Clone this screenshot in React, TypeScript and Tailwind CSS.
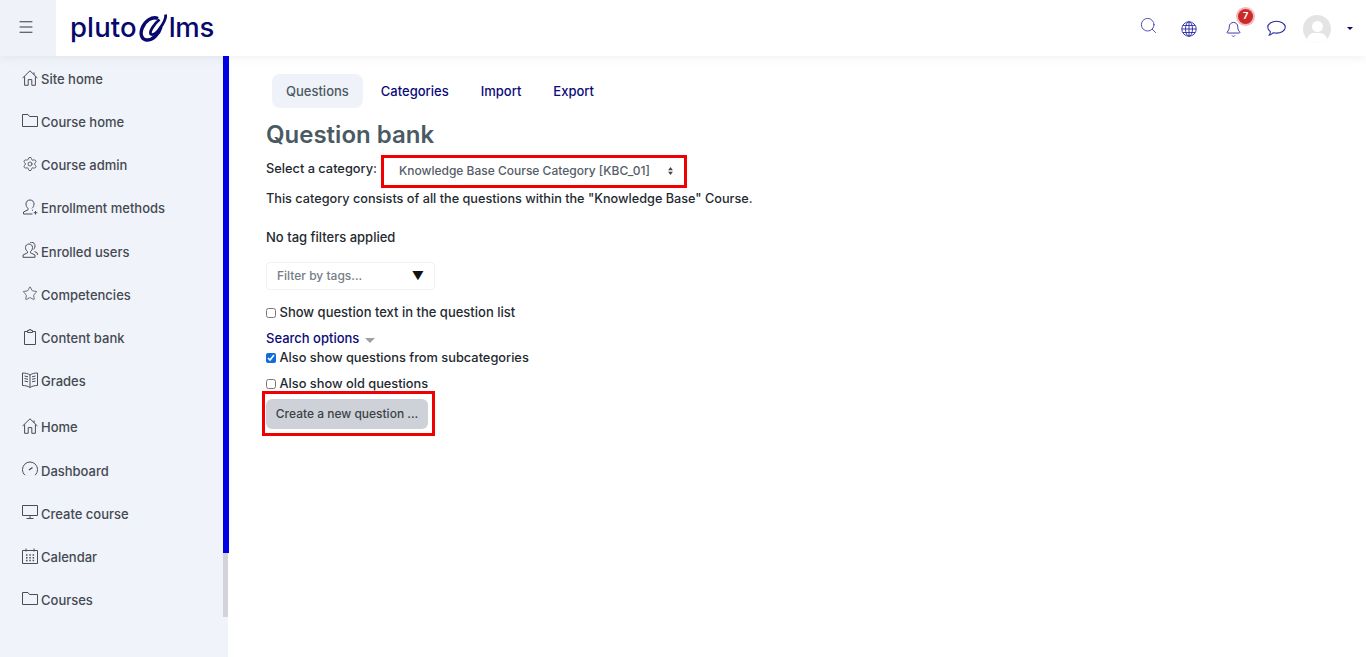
import { Menu, Search, Bell, Settings, Star } from 'lucide-react';
import type { ReactNode } from 'react';

const FONT = "font-['Inter','Liberation_Sans',sans-serif]";

function Line({ children, className }: { children: ReactNode; className?: string }) {
  return (
    <svg viewBox="0 0 16 16" fill="none" stroke="currentColor" strokeWidth="1" className={className}>
      {children}
    </svg>
  );
}

const houseIcon = (
  <Line className="size-[16px]">
    <path d="M.6 8 8 .8 15.4 8M2.600 6.400v8.900h3.600V9.600h3.600v5.700h3.600V6.400M12 2.400v2.400" />
  </Line>
);
const folderIcon = (
  <Line className="size-[16px]">
    <path d="M.5 13.500V1.500h5.500l1.500 2h8v10z" />
  </Line>
);
const gearIcon = <Settings size={16} strokeWidth={1.3} />;
const userPlusIcon = (
  <Line className="size-[16px]">
    <path d="M8 1c-2.400 0-4 1.600-4 4 0 2 1 3.500 2 4.300v1.500L1.500 13v2h9M10 9.300c1-.8 2-2.300 2-4.300 0-2.400-1.600-4-4-4M10 11l1 .4M13.500 12v3.500M11.700 13.700h3.600" />
  </Line>
);
const usersIcon = (
  <Line className="size-[16px]">
    <path d="M7 2C4.800 2 3.500 3.500 3.500 5.500c0 2 .8 3.200 2 4v1.300L1 13v2.300h12V13l-4.500-2.200V9.500c1.200-.8 2-2 2-4C10.500 3.500 9.200 2 7 2zM8 .7c.5-.3 1-.4 1.500-.4 2.200 0 3.500 1.500 3.500 3.500 0 1.700-.6 2.800-1.500 3.600M12.500 9.500 15.300 11v2" />
  </Line>
);
const starIcon = <Star size={17} strokeWidth={1.2} />;
const clipboardIcon = (
  <Line className="size-[16px]">
    <path d="M2.500 2.500h3M10.500 2.500h3v13h-11v-13M5.500 3.500v-2h1.500V.7h2v.8h1.500v2z" />
  </Line>
);
const bookIcon = (
  <Line className="size-[16px]">
    <path d="M8 3C6 1.500 3 1 .5 1v12.500c2.500 0 5.500.5 7.500 2 2-1.500 5-2 7.500-2V1C13 1 10 1.500 8 3zM8 3v12.500M2.500 4 6 4.800M2.500 6.500 6 7.300M2.500 9 6 9.800M13.500 4l-3.500.8M13.500 6.500l-3.500.8M13.500 9l-3.500.8" />
  </Line>
);
const gaugeIcon = (
  <Line className="size-[16px]">
    <path d="M3 14.200C1.400 12.800.5 10.800.5 8.500A7.500 7.500 0 0 1 8 1a7.500 7.500 0 0 1 7.500 7.500c0 2.300-.9 4.300-2.500 5.700" />
    <path d="M7 9l3.500-2.500" strokeWidth="1.400" />
  </Line>
);
const monitorIcon = (
  <Line className="size-[16px]">
    <path d="M.5 1.500h15v10H.5zM8 11.500v2.500M4.500 14.500h7" />
  </Line>
);
const calendarIcon = (
  <Line className="size-[16px]">
    <path d="M.5 2.500h15v13H.5zM4 .5v3M12 .5v3" />
    <path d="M4 7h1.500M7.300 7h1.500M10.600 7h1.500M4 9.700h1.500M7.300 9.700h1.500M10.600 9.700h1.500M4 12.400h1.500M7.300 12.400h1.500M10.600 12.400h1.500" strokeWidth="1.500" />
  </Line>
);

const SITE_NAV: [string, ReactNode][] = [
  ['Site home', houseIcon],
  ['Course home', folderIcon],
  ['Course admin', gearIcon],
  ['Enrollment methods', userPlusIcon],
  ['Enrolled users', usersIcon],
  ['Competencies', starIcon],
  ['Content bank', clipboardIcon],
  ['Grades', bookIcon],
];

const MAIN_NAV: [string, ReactNode][] = [
  ['Home', houseIcon],
  ['Dashboard', gaugeIcon],
  ['Create course', monitorIcon],
  ['Calendar', calendarIcon],
  ['Courses', folderIcon],
];

function NavItem({ label, icon }: { label: string; icon: ReactNode }) {
  return (
    <a className="flex h-[43.2px] items-center pl-[22px] pt-[4px] text-[13px] font-medium text-[#444a52]">
      <span className="mr-[3px] -mt-[4px] flex w-[16px] shrink-0 justify-center text-[#4c4c58]">{icon}</span>
      {label}
    </a>
  );
}

function Logo() {
  return (
    <div className="flex items-center text-[27.500px] leading-none font-medium tracking-[0.1px] text-[#08086e]">
      <span>pluto</span>
      <svg viewBox="0 0 28 30" className="ml-[2px] -mt-[1px] h-[30px] w-[28px]" fill="none" stroke="#08086e">
        <path d="M19 5.500C13 3 6 8 3.200 15c-2.400 6-.6 11.500 4 12 6.500.6 13-6.500 14.800-13" strokeWidth="3.400" />
        <path d="M26.500 1.500c.6 2.500-1.500 8-5 13-3 4.400-6.500 7.500-9 7-1.800-.5-1.200-3.500 1-7 2-3.200 4.500-6 7-8" strokeWidth="2.800" />
      </svg>
      <span className="ml-[2px] tracking-[-0.3px]">lms</span>
    </div>
  );
}

function Check({ label, checked, size }: { label: string; checked?: boolean; size: string }) {
  return (
    <label className={`flex items-center font-medium text-[#1f2a30] ${size}`}>
      <input type="checkbox" readOnly checked={!!checked} className="mr-[3.500px] -mt-[1px] size-[10px] accent-[#0f6cdb]" />
      {label}
    </label>
  );
}

export default function App() {
  return (
    <div className={`${FONT} flex h-[657px] flex-col overflow-hidden bg-white`}>
      {/* Top bar */}
      <header className="relative z-10 flex h-[56px] shrink-0 items-center bg-white shadow-[0_2px_10px_rgba(0,0,0,0.06)]">
        <button className="flex h-full w-[56px] items-center justify-center bg-[#eff2f8] pr-[4px] text-[#333]">
          <Menu size={18} strokeWidth={1.3} className="-mt-[2px]" />
        </button>
        <div className="ml-[14px]">
          <Logo />
        </div>
        <div className="ml-auto flex items-center text-[#2a2aa5]">
          <Search size={19} strokeWidth={1.2} className="-mt-[5px] text-[#4a4ab0]" />
          <svg viewBox="0 0 16 16" fill="none" stroke="currentColor" strokeWidth="0.9" className="ml-[23px] mt-[2px] size-[16px]">
            <circle cx="8" cy="8" r="7.200" />
            <ellipse cx="8" cy="8" rx="3.500" ry="7.200" />
            <path d="M8 .8v14.400M.8 8h14.400M1.800 4.500h12.400M1.800 11.500h12.400" />
          </svg>
          <div className="relative ml-[28px] mt-[2px]">
            <Bell size={17} strokeWidth={1.3} />
            <span className="absolute -top-[12px] left-[13px] flex size-[15px] items-center justify-center rounded-full bg-[#ca2a2a] text-[9px] font-bold text-white ring-2 ring-[#f3b8bc]">
              7
            </span>
          </div>
          <svg viewBox="0 0 18 16" fill="none" stroke="currentColor" strokeWidth="1" className="ml-[25px] h-[17px] w-[19px]">
            <path d="M9 1.200c4.400 0 8.300 2.300 8.300 5.600 0 3.300-3.900 5.600-8.300 5.600-1 0-2-.1-3-.4-1 .9-2.200 1.800-3.800 2.200.6-.9 1-2 1-3.200C1.900 9.900.7 8.500.7 6.800c0-3.300 3.900-5.600 8.300-5.600z" />
          </svg>
          <div className="relative ml-[17px] mt-[2px] size-[28px] overflow-hidden rounded-full bg-[#e4e4e4]">
            <span className="absolute left-[9px] top-[6px] size-[11px] rounded-full bg-white" />
            <span className="absolute left-[4px] top-[18px] h-[14px] w-[20px] rounded-full bg-white" />
          </div>
          <span className="ml-[16px] mr-[13px] h-0 w-0 border-x-[3px] border-t-[3px] border-x-transparent border-t-[#08086e]" />
        </div>
      </header>

      <div className="flex min-h-0 flex-1">
        {/* Sidebar */}
        <aside className="flex w-[228px] shrink-0 bg-[#f0f3f9]">
          <nav className="min-w-0 flex-1">
            {SITE_NAV.map(([label, icon]) => (
              <NavItem key={label} label={label} icon={icon} />
            ))}
            <div className="mt-[3px]">
              {MAIN_NAV.map(([label, icon]) => (
                <NavItem key={label} label={label} icon={icon} />
              ))}
            </div>
          </nav>
          <div className="flex w-[5px] shrink-0 flex-col">
            <div className="h-[497px] w-[6px] shrink-0 bg-[#0000e6]" />
            <div className="h-[64px] shrink-0 bg-[#d2d4da]" />
          </div>
        </aside>

        {/* Main */}
        <main className="min-w-0 flex-1 pl-[38px] pt-[18px] text-[13px] font-medium text-[#1f2a30]">
          <div className="flex h-[34px] gap-[4px] pl-[6px] text-[13px] text-[#0a0a78]">
            <a className="flex items-center rounded-lg bg-[#eff2f8] px-[14px] pt-[2px] text-[#4a5a62]">Questions</a>
            <a className="flex items-center px-[14px] pt-[2px]">Categories</a>
            <a className="flex items-center px-[14px] pt-[2px]">Import</a>
            <a className="flex items-center px-[14px] pt-[2px]">Export</a>
          </div>

          <h2 className="mt-[11px] h-[32px] text-[24px] leading-[32px] font-semibold text-[#4a5a62]">Question bank</h2>

          <div className="mt-[4px] flex h-[33px] items-center">
            <span className="-mt-[5px] text-[12.800px]">Select a category:</span>
            <div className="ml-[4px] flex h-[33px] w-[306px] items-center border-[3px] border-[#f00000] pb-[2px] pl-[15px] pr-[6px] text-[12px] text-[#555d66]">
              Knowledge Base Course Category [KBC_01]
              <svg viewBox="0 0 6 10" fill="#444" className="ml-auto mr-[5px] h-[8px] w-[5px]">
                <path d="M3 0l3 4H0zM3 10 0 6h6z" />
              </svg>
            </div>
          </div>

          <p className="mt-[1px] h-[20px] text-[12.700px] leading-[20px]">This category consists of all the questions within the "Knowledge Base" Course.</p>
          <p className="mt-[18px] h-[20px] leading-[20px]">No tag filters applied</p>

          <div className="mt-[15px] flex h-[28px] w-[169px] items-center rounded border border-[#f0f1f4] pl-[10px] pr-[10px] text-[12px] text-[#767d86]">
            Filter by tags...
            <span className="ml-auto text-[12px] text-[#111]">▼</span>
          </div>

          <div className="mt-[14px] flex h-[18px] items-center">
            <Check size="text-[13px]" label="Show question text in the question list" />
          </div>

          <a className="mt-[8px] flex h-[18px] items-center text-[#0a0a78]">
            Search options
            <span className="ml-[6px] mt-[2px] h-0 w-0 border-x-[5px] border-t-[5px] border-x-transparent border-t-[#a0a0a0]" />
          </a>

          <div className="mt-[1px] flex h-[18px] items-center">
            <Check checked size="text-[12.800px]" label="Also show questions from subcategories" />
          </div>
          <div className="mt-[8px] flex h-[18px] items-center">
            <Check size="text-[12.800px]" label="Also show old questions" />
          </div>

          <div className="-ml-[4px] mt-[-2px] w-[173px] border-[3px] border-[#f00000] pb-[4px] pl-[1px] pt-[5px]">
            <button className="flex h-[30px] w-[162px] items-center justify-center rounded-md bg-[#ced2d8] text-[12px] text-[#3c4248]">
              Create a new question ...
            </button>
          </div>
        </main>
      </div>
    </div>
  );
}
